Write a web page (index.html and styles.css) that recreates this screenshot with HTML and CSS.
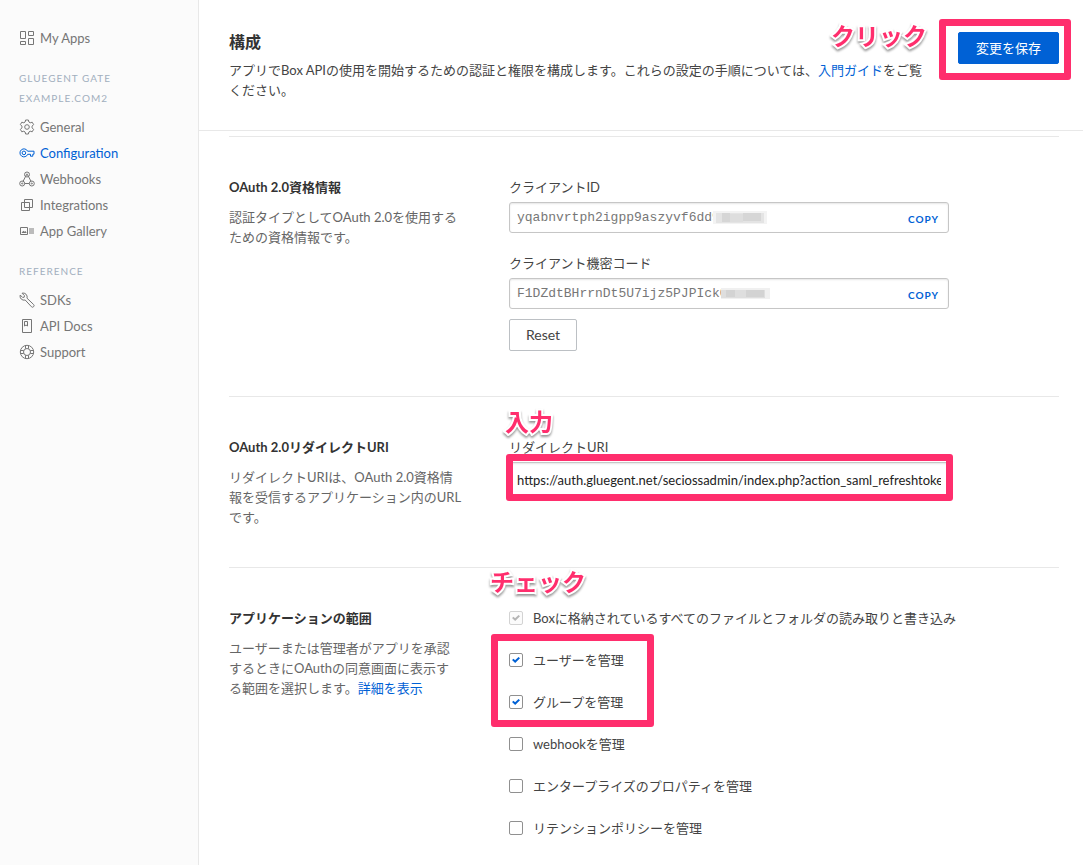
FILE: index.html
```html
<!DOCTYPE html>
<html lang="ja">
<head>
  <meta charset="UTF-8" />
  <meta name="viewport" content="width=device-width, initial-scale=1.0" />
  <title>構成</title>
  <link rel="stylesheet" href="styles.css">
</head>
<body>
  <div class="layout">
    <nav class="sidebar">
      <a class="nav-item" href="#">
        <svg class="icon" viewBox="0 0 16 16"><path d="M1.500 1.500h5v7h-5zM9.500 1.500h5v4h-5zM1.500 11.500h5v3h-5zM9.500 8.500h5v6h-5z"/></svg>
        My Apps
      </a>

      <h2 class="nav-heading">GLUEGENT GATE<br>EXAMPLE.COM2</h2>
      <a class="nav-item" href="#">
        <svg class="icon" viewBox="0 0 16 16"><path d="M6.600 1h2.800l.5 2 1.300.8 2-.6 1.400 2.400-1.500 1.500v1.800l1.500 1.500-1.400 2.400-2-.6-1.300.8-.5 2H6.600l-.5-2-1.300-.8-2 .6-1.400-2.400 1.500-1.500V7.100L1.400 5.600l1.400-2.400 2 .6L6.100 3z"/><circle cx="8" cy="8" r="2.300"/></svg>
        General
      </a>
      <a class="nav-item active" href="#">
        <svg class="icon" viewBox="0 0 16 16"><path d="M8.600 6.200H15v3h-1.200v2h-2.300V9.300H8.700A4 4 0 1 1 8.600 6.200z"/><circle cx="4.900" cy="7.900" r="1.800"/></svg>
        Configuration
      </a>
      <a class="nav-item" href="#">
        <svg class="icon" viewBox="0 0 16 16"><circle cx="8" cy="3.500" r="2.500"/><circle cx="3.200" cy="12.500" r="2.500"/><circle cx="12.800" cy="12.500" r="2.500"/><path d="M7.300 4 4 10.500M8.700 4l3.400 6.500M5.600 12.500h4.700"/><circle cx="8" cy="3.500" r=".6"/><circle cx="3.200" cy="12.500" r=".6"/><circle cx="12.800" cy="12.500" r=".6"/></svg>
        Webhooks
      </a>
      <a class="nav-item" href="#">
        <svg class="icon" viewBox="0 0 16 16"><path d="M5.500 2.500h8v8h-8zM2.500 5.500h8v8h-8z"/></svg>
        Integrations
      </a>
      <a class="nav-item" href="#">
        <svg class="icon" viewBox="0 0 16 16"><path d="M1.500 4.500h7v7h-7z"/><path class="solid" d="M2.500 10 4.300 7.800l1.200 1 1-.8 1.200 2z"/><path class="soft" d="M10 5h5v6h-5z"/></svg>
        App Gallery
      </a>

      <h2 class="nav-heading">REFERENCE</h2>
      <a class="nav-item" href="#">
        <svg class="icon" viewBox="0 0 16 16"><path d="M3 1.200 5.500 3.700 5.200 5.200 3.700 5.500 1.200 3a4 4 0 0 0 5 5l6.200 6.700a1.300 1.300 0 0 0 2.200-2.200L8 6.200a4 4 0 0 0-5-5z"/></svg>
        SDKs
      </a>
      <a class="nav-item" href="#">
        <svg class="icon" viewBox="0 0 16 16"><path d="M3.500 1.500h9v13h-9z"/><path d="M5.500 3.500h3v4.500L7 7 5.500 8z"/></svg>
        API Docs
      </a>
      <a class="nav-item" href="#">
        <svg class="icon" viewBox="0 0 16 16"><circle cx="8" cy="8" r="6.700"/><circle cx="8" cy="8" r="3.500"/><path d="M6.500 1.500v3.200M9.500 1.500v3.200M6.500 11.300v3.200M9.500 11.300v3.200M1.500 6.500h3.200M1.500 9.500h3.200M11.300 6.500h3.200M11.300 9.500h3.200"/></svg>
        Support
      </a>
    </nav>

    <main class="main">
      <header class="header">
        <div class="header-text">
          <h1>構成</h1>
          <p>アプリでBox APIの使用を開始するための認証と権限を構成します。これらの設定の手順については、<a href="#">入門ガイド</a>をご覧ください。</p>
        </div>
        <div class="save">
          <button class="btn btn-primary" type="button">変更を保存</button>
          <span class="frame frame-save"></span>
          <span class="note note-save">クリック</span>
        </div>
      </header>

      <div class="sections">
        <section class="section">
          <div class="section-info">
            <h3>OAuth 2.0資格情報</h3>
            <p>認証タイプとしてOAuth 2.0を使用するための資格情報です。</p>
          </div>
          <div class="section-body">
            <label for="clientId">クライアントID</label>
            <div class="copy-field">
              <input class="field code" id="clientId" type="text" value="yqabnvrtph2igpp9aszyvf6dd9" readonly>
              <svg class="mosaic" viewBox="0 0 60 20">
                <path fill="#fff" d="M0 0h60v20H0z"/>
                <path fill="#f3f3f3" d="M0 3h54v13H0z"/>
                <path fill="#e4e4e4" d="M3 5h48v10H3z"/>
                <path fill="#d6d6d6" d="M9 5h8v9H9zM30 5h18v8H30z"/>
                <path fill="#dedede" d="M17 6h13v8H17z"/>
              </svg>
              <button class="copy" type="button">COPY</button>
            </div>

            <label for="clientSecret">クライアント機密コード</label>
            <div class="copy-field">
              <input class="field code" id="clientSecret" type="text" value="F1DZdtBHrrnDt5U7ijz5PJPIckC" readonly>
              <svg class="mosaic mosaic-secret" viewBox="0 0 60 20">
                <path fill="#fff" d="M0 0h60v20H0z"/>
                <path fill="#f0f0f0" d="M0 4h49v11H0z"/>
                <path fill="#dedede" d="M0 6h44v8H0z"/>
                <path fill="#d3d3d3" d="M5 6h9v7H5zM25 6h18v7H25z"/>
              </svg>
              <button class="copy" type="button">COPY</button>
            </div>
            <button class="btn btn-reset" type="button">Reset</button>
          </div>
        </section>

        <section class="section">
          <div class="section-info">
            <h3>OAuth 2.0リダイレクトURI</h3>
            <p>リダイレクトURIは、OAuth 2.0資格情<br>報を受信するアプリケーション内のURL<br>です。</p>
          </div>
          <div class="section-body">
            <label for="redirectUri">リダイレクトURI</label>
            <div class="uri-field">
              <input class="field uri" id="redirectUri" type="text" value="https://auth.gluegent.net/seciossadmin/index.php?action_saml_refreshtoken">
              <span class="frame frame-uri"></span>
              <span class="note note-uri">入力</span>
            </div>
          </div>
        </section>

        <section class="section">
          <div class="section-info">
            <h3>アプリケーションの範囲</h3>
            <p>ユーザーまたは管理者がアプリを承認<br>するときにOAuthの同意画面に表示す<br>る範囲を選択します。<a href="#">詳細を表示</a></p>
          </div>
          <div class="section-body scopes">
            <label class="check"><input type="checkbox" checked disabled>Boxに格納されているすべてのファイルとフォルダの読み取りと書き込み</label>
            <div class="scope-group">
              <label class="check"><input type="checkbox" checked>ユーザーを管理</label>
              <label class="check"><input type="checkbox" checked>グループを管理</label>
              <span class="frame frame-scope"></span>
              <span class="note note-scope">チェック</span>
            </div>
            <label class="check"><input type="checkbox">webhookを管理</label>
            <label class="check"><input type="checkbox">エンタープライズのプロパティを管理</label>
            <label class="check"><input type="checkbox">リテンションポリシーを管理</label>
          </div>
        </section>
      </div>
    </main>
  </div>
</body>
</html>
```
FILE: styles.css
```css
* {
  margin: 0;
  padding: 0;
  box-sizing: border-box;
}

body {
  font-family: Lato, "Noto Sans CJK JP", sans-serif;
  font-size: 13px;
  line-height: 20px;
  color: #444;
  background: #fff;
}

a {
  color: #0061d5;
  text-decoration: none;
}

button, input {
  font: inherit;
}

.layout {
  display: flex;
  min-height: 100vh;
}

/* sidebar */
.sidebar {
  flex: none;
  width: 199px;
  padding: 25px 19px;
  background: #fbfbfb;
  border-right: 1px solid #e8e8e8;
}

.nav-item {
  display: flex;
  align-items: center;
  gap: 5px;
  height: 26px;
  color: #767676;
}

.nav-item.active {
  color: #0061d5;
}

.nav-heading {
  margin: 17px 0 6px;
  font-size: 10px;
  font-weight: normal;
  letter-spacing: 1px;
  color: #a2afbe;
}

.icon {
  width: 16px;
  height: 16px;
  fill: none;
  stroke: currentColor;
  stroke-width: 1;
}

.icon .solid {
  fill: currentColor;
  stroke: none;
}

.icon .soft {
  fill: #bbb;
  stroke: none;
}

/* header */
.main {
  flex: 1;
  min-width: 0;
}

.header {
  display: flex;
  align-items: flex-start;
  gap: 25px;
  padding: 30px 24px 30px 30px;
  border-bottom: 1px solid #e8e8e8;
}

.header-text {
  flex: 1;
}

.header h1 {
  margin-bottom: 6px;
  font-size: 16px;
  line-height: 24px;
  color: #333;
}

.save {
  position: relative;
  padding-top: 2px;
}

.btn {
  display: block;
  height: 32px;
  padding: 0 16px;
  border: 1px solid #bcc0c4;
  border-radius: 2px;
  background: #fff;
  color: #444;
  cursor: pointer;
}

.btn-primary {
  padding: 0 17px;
  border-color: #0061d5;
  background: #0061d5;
  color: #fff;
}

.btn-reset {
  margin-bottom: 5px;
  font-size: 14px;
}

/* sections */
.sections {
  padding: 5px 24px 0 30px;
}

.section {
  display: grid;
  grid-template-columns: 240px 1fr;
  gap: 40px;
  padding: 40px 0;
  border-top: 1px solid #e8e8e8;
}

.section h3 {
  margin-bottom: 10px;
  font-size: 13px;
  color: #333;
}

.section-info p {
  color: #666;
}

.section-body > label {
  display: block;
}

.copy-field, .uri-field {
  position: relative;
  max-width: 440px;
  margin-top: 5px;
}

.copy-field {
  margin-bottom: 20px;
}

.copy-field:has(+ .btn-reset) {
  margin-bottom: 10px;
}

.field {
  display: block;
  width: 100%;
  height: 31px;
  padding: 0 7px;
  border: 1px solid #c6c6c6;
  border-radius: 3px;
  box-shadow: inset 0 1px 2px rgba(0, 0, 0, 0.1);
  background: #fff;
  color: #222;
}

.code {
  padding-right: 60px;
  font-family: "Liberation Mono", monospace;
  color: #777;
}

.uri {
  height: 35px;
}

.copy {
  position: absolute;
  top: 7px;
  right: 10px;
  border: none;
  background: none;
  font-size: 10px;
  font-weight: bold;
  letter-spacing: 1px;
  color: #0061d5;
  cursor: pointer;
}

.mosaic {
  position: absolute;
  top: 6px;
  left: 204px;
  width: 60px;
  height: 20px;
}

.mosaic-secret {
  left: 212px;
}

/* scopes */
.scopes, .scope-group {
  display: flex;
  flex-direction: column;
  align-items: flex-start;
  gap: 22px;
}

.scope-group {
  position: relative;
}

.section-body .check {
  display: flex;
  align-items: center;
  gap: 10px;
}

.check input {
  display: grid;
  place-items: center;
  width: 14px;
  height: 14px;
  appearance: none;
  border: 1px solid #909090;
  border-radius: 2px;
  color: #0061d5;
}

.check input:checked::before {
  content: "";
  width: 8px;
  height: 6px;
  background: currentColor;
  clip-path: polygon(0 50%, 20% 30%, 38% 55%, 82% 0, 100% 20%, 40% 100%);
}

.check input:disabled {
  border-color: #d3d3d3;
  background: #fbfbfb;
  color: #b5b5b5;
}

/* annotations */
.frame {
  position: absolute;
  border: 7px solid #ff2e6d;
  border-radius: 3px;
  pointer-events: none;
}

.frame-save {
  inset: -11px -12px -16px -19px;
}

.frame-uri {
  inset: -8px -4px -4px -3px;
}

.frame-scope {
  inset: -16px -30px -15px -18px;
}

.note {
  position: absolute;
  font-size: 24px;
  line-height: 28px;
  font-weight: bold;
  white-space: nowrap;
  color: #ff2e6d;
  -webkit-text-stroke: 4px #fff;
  paint-order: stroke fill;
  filter: drop-shadow(0 2px 1px rgba(0, 0, 0, 0.4));
  pointer-events: none;
}

.note-save {
  top: -8px;
  right: 132px;
}

.note-uri {
  top: -54px;
  left: -4px;
}

.note-scope {
  top: -82px;
  left: -19px;
}
```
